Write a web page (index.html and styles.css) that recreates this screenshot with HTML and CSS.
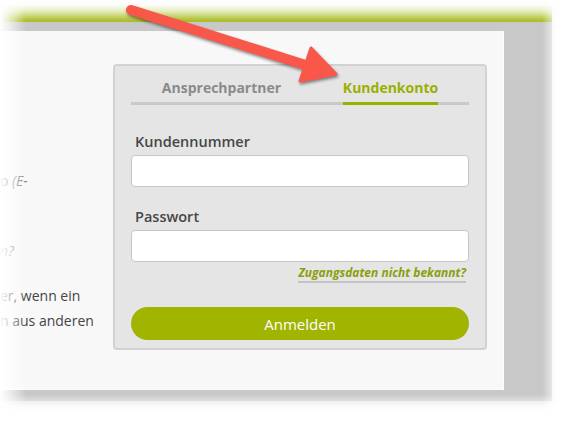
FILE: index.html
```
<!DOCTYPE html>
<html lang="de">
<head>
    <meta charset="UTF-8">
    <meta name="viewport" content="width=device-width, initial-scale=1.0">
    <link rel="stylesheet" href="styles.css">
    <title>Kundenkonto</title>
</head>
<body>
    <div class="shot">
        <div class="topbar"></div>
        <div class="frame">
            <div class="panel">
                <div class="intro">
                    <p>o <i>(E-</i></p>
                    <p class="gap"><i>n?</i></p>
                    <p class="gap2">er, wenn ein</p>
                    <p>n aus anderen</p>
                </div>
                <div class="login">
                    <div class="tabs">
                        <div class="tab"><span>Ansprechpartner</span></div>
                        <div class="tab activo"><span>Kundenkonto</span></div>
                    </div>
                    <form class="campos">
                        <label for="kdnr">Kundennummer</label>
                        <input type="text" id="kdnr">
                        <label for="pw" class="segundo">Passwort</label>
                        <input type="password" id="pw">
                        <div class="olvido"><a href="#">Zugangsdaten nicht bekannt?</a></div>
                        <button type="button">Anmelden</button>
                    </form>
                </div>
            </div>
        </div>
    </div>

    <!-- bordes difuminados de la captura -->
    <div class="fade fade-left"></div>
    <div class="fade fade-right"></div>
    <div class="fade fade-bottom"></div>

    <svg class="flecha" width="572" height="422" viewBox="0 0 572 422">
        <line x1="131" y1="10" x2="318" y2="69" stroke="#f9574a" stroke-width="10" stroke-linecap="round"/>
        <polygon points="300,81 311,48 336,74" fill="#f9574a" stroke="#f9574a" stroke-width="3" stroke-linejoin="round"/>
    </svg>
</body>
</html>
```
FILE: styles.css
```
* {
    margin: 0;
    padding: 0;
    box-sizing: border-box;
}
body {
    width: 572px;
    height: 422px;
    overflow: hidden;
    position: relative;
    background-color: #fff;
    font-family: "Open Sans", "Liberation Sans", sans-serif;
}
.shot {
    width: 552px;
    margin-top: 4px;
    box-shadow: 0 6px 10px rgba(0, 0, 0, 0.12);
}
.topbar {
    height: 18px;
    background: linear-gradient(to bottom, #ffffff 0%, #e6ecbf 40%, #b4c43c 85%, #a9bb2c 100%);
}
.frame {
    background-color: #c8c8c8;
    padding: 9px 48px 11px 0;
}
.panel {
    height: 359px;
    background-color: #f8f8f8;
    border-right: 1px solid #fdfdfd;
    border-bottom: 1px solid #fdfdfd;
    display: flex;
    padding-top: 33px;
}
.intro {
    width: 113px;
    padding-top: 104px;
    font-size: 14px;
    line-height: 25px;
    color: #444;
}
.intro i {color: #888;}
.intro .gap {margin-top: 45px;}
.intro .gap2 {margin-top: 20px;}

.login {
    width: 374px;
    height: 286px;
    background-color: #e5e5e5;
    border: 2px solid #d2d2d2;
    border-radius: 4px;
    padding: 12px 16px 0 16px;
}
.tabs {
    display: grid;
    grid-template-columns: 1fr 1fr;
    border-bottom: 3px solid #c9c9c9;
}
.tab {
    text-align: center;
    padding-left: 12px;
    font-size: 14px;
    font-weight: 700;
    line-height: 20px;
    color: #8a8a8a;
}
.tab span {
    display: inline-block;
    padding-bottom: 4px;
}
.tab.activo {color: #9ab000;}
.tab.activo span {
    border-bottom: 3px solid #9ab000;
    margin-bottom: -3px;
}
.campos {
    display: flex;
    flex-direction: column;
}
.campos label {
    margin-top: 27px;
    padding-left: 4px;
    font-size: 14.5px;
    font-weight: 600;
    line-height: 20px;
    color: #474747;
}
.campos label.segundo {margin-top: 20px;}
.campos input {
    margin-top: 3px;
    height: 32px;
    background-color: #fff;
    border: 1px solid #c6c6c6;
    border-radius: 4px;
}
.olvido {
    margin-top: 2px;
    text-align: right;
    padding-right: 3px;
    font-size: 12px;
    line-height: 17px;
    display: flex;
    justify-content: flex-end;
}
.olvido a {
    display: block;
    font-size: 12px;
    font-weight: 700;
    font-style: italic;
    line-height: 17px;
    color: #8c9e0c;
    text-decoration: none;
    border-bottom: 2px solid #c4c4c4;
}
.campos button {
    margin-top: 24px;
    height: 33px;
    border: none;
    border-radius: 17px;
    background-color: #a0b400;
    color: #fff;
    font-family: inherit;
    font-size: 15px;
}

.fade {
    position: absolute;
    pointer-events: none;
}
.fade-left {
    left: 0;
    top: 0;
    bottom: 0;
    width: 26px;
    background: linear-gradient(to right, #fff 0%, rgba(255, 255, 255, 0.6) 45%, rgba(255, 255, 255, 0) 100%);
}
.fade-right {
    right: 0;
    top: 0;
    bottom: 0;
    width: 30px;
    background: linear-gradient(to right, rgba(255, 255, 255, 0) 0%, rgba(255, 255, 255, 0.8) 50%, #fff 100%);
}
.fade-bottom {
    left: 0;
    right: 0;
    top: 394px;
    height: 28px;
    background: linear-gradient(to bottom, rgba(255, 255, 255, 0) 0%, rgba(255, 255, 255, 0.85) 55%, #fff 100%);
}
.flecha {
    position: absolute;
    left: 0;
    top: 0;
    filter: drop-shadow(1px 2px 1.5px rgba(0, 0, 0, 0.45));
}
```
